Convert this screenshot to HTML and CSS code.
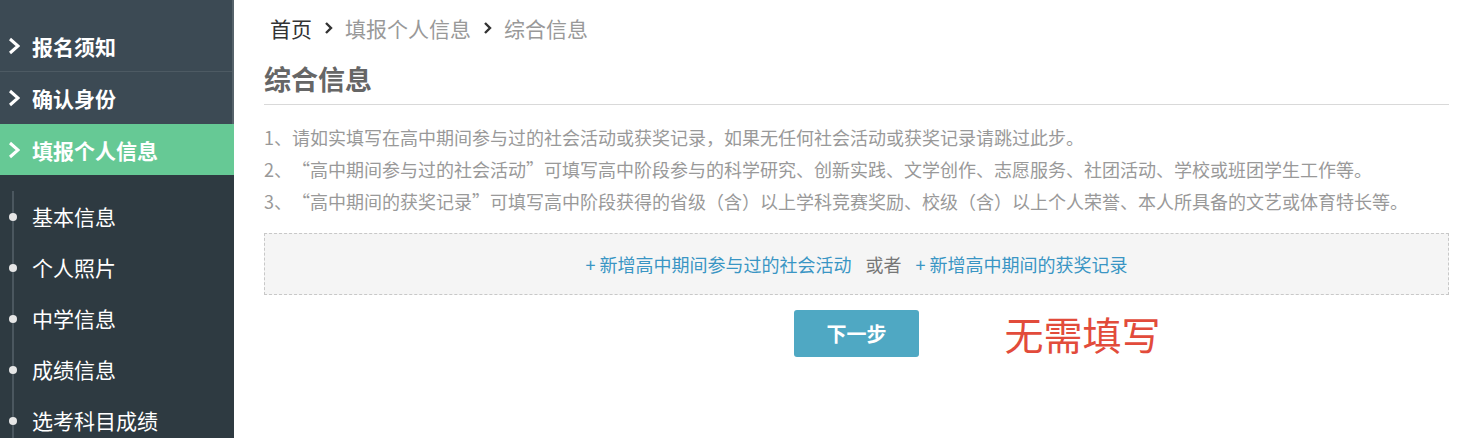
FILE: index.html
```html
<!DOCTYPE html>
<html lang="zh-CN">
<head>
  <meta charset="UTF-8">
  <title>综合信息</title>
  <link rel="stylesheet" href="styles.css">
</head>
<body>
  <div id="layout">
    <div id="sidebar">
      <div class="nav-top">
        <div class="nav-item sep">
          <svg class="arrow" width="12" height="18" viewBox="0 0 12 18"><polyline points="2,2 10,9 2,16" fill="none" stroke="#fff" stroke-width="3"/></svg>
          报名须知
        </div>
        <div class="nav-item">
          <svg class="arrow" width="12" height="18" viewBox="0 0 12 18"><polyline points="2,2 10,9 2,16" fill="none" stroke="#fff" stroke-width="3"/></svg>
          确认身份
        </div>
      </div>
      <div class="nav-item active">
        <svg class="arrow" width="12" height="18" viewBox="0 0 12 18"><polyline points="2,2 10,9 2,16" fill="none" stroke="#fff" stroke-width="3"/></svg>
        填报个人信息
      </div>
      <div class="sub-wrap">
        <ul class="sub-list">
          <li>基本信息</li>
          <li>个人照片</li>
          <li>中学信息</li>
          <li>成绩信息</li>
          <li>选考科目成绩</li>
        </ul>
      </div>
    </div>

    <div id="main">
      <div class="crumbs">
        <span class="home">首页</span>
        <svg class="crumb-sep" width="10" height="14" viewBox="0 0 10 14"><polyline points="2,2 7,7 2,12" fill="none" stroke="#333" stroke-width="2.4"/></svg>
        <span>填报个人信息</span>
        <svg class="crumb-sep" width="10" height="14" viewBox="0 0 10 14"><polyline points="2,2 7,7 2,12" fill="none" stroke="#333" stroke-width="2.4"/></svg>
        <span>综合信息</span>
      </div>

      <h2 class="title">综合信息</h2>

      <div class="notes">
        <p>1、请如实填写在高中期间参与过的社会活动或获奖记录，如果无任何社会活动或获奖记录请跳过此步。</p>
        <p>2、“高中期间参与过的社会活动”可填写高中阶段参与的科学研究、创新实践、文学创作、志愿服务、社团活动、学校或班团学生工作等。</p>
        <p>3、“高中期间的获奖记录”可填写高中阶段获得的省级（含）以上学科竞赛奖励、校级（含）以上个人荣誉、本人所具备的文艺或体育特长等。</p>
      </div>

      <div class="add-box">
        <a href="#">+ 新增高中期间参与过的社会活动</a>
        <span class="or">或者</span>
        <a href="#">+ 新增高中期间的获奖记录</a>
      </div>

      <div class="actions">
        <button class="next">下一步</button>
        <span class="hint">无需填写</span>
      </div>
    </div>
  </div>
</body>
</html>
```

FILE: styles.css
```css
    html, body {
      margin: 0;
      height: 100%;
    }

    body {
      font-family: "Microsoft YaHei", "Noto Sans CJK SC", sans-serif;
      background-color: #fff;
      overflow: hidden;
    }

    #layout {
      display: flex;
      height: 100%;
    }

    #sidebar {
      width: 234px;
      flex-shrink: 0;
      background-color: #2e3a41;
    }

    .nav-top {
      background-color: #3c4a54;
      padding-top: 20px;
      border-right: 2px solid #56636b;
    }

    .nav-item {
      height: 52px;
      display: flex;
      align-items: center;
      padding-left: 8px;
      color: #fff;
      font-size: 21px;
      font-weight: bold;
      box-sizing: border-box;
    }

    .nav-item .arrow {
      margin-right: 12px;
    }

    .nav-item.sep {
      border-bottom: 1px solid #4d5a63;
    }

    .nav-item.active {
      background-color: #66c995;
      height: 51px;
    }

    .sub-wrap {
      padding-top: 16px;
    }

    .sub-list {
      list-style: none;
      margin: 0 0 0 12px;
      padding: 0;
      border-left: 2px solid #4b575f;
    }

    .sub-list li {
      position: relative;
      height: 51px;
      line-height: 51px;
      padding-left: 18px;
      color: #fff;
      font-size: 21px;
    }

    /* little dot on the line */
    .sub-list li::before {
      content: "";
      position: absolute;
      left: -5px;
      top: 22px;
      width: 8px;
      height: 8px;
      border-radius: 50%;
      background-color: #e6e6e6;
    }

    #main {
      flex: 1;
      padding: 0 25px 0 30px;
    }

    .crumbs {
      padding-top: 14px;
      line-height: 28px;
      font-size: 21px;
      color: #999;
      display: flex;
      align-items: center;
      padding-left: 6px;
    }

    .crumbs .home {
      color: #333;
    }

    .crumb-sep {
      margin: 0 11px 0 12px;
    }

    .title {
      margin: 19px 0 0 0;
      padding-bottom: 7px;
      font-size: 27px;
      line-height: 36px;
      color: #666;
      border-bottom: 1px solid #d9d9d9;
    }

    .notes {
      margin-top: 16px;
    }

    .notes p {
      margin: 0;
      font-size: 18px;
      line-height: 32px;
      color: #999;
      white-space: nowrap;
      text-spacing-trim: space-all;
    }

    .add-box {
      margin-top: 16px;
      height: 60px;
      line-height: 60px;
      border: 1px dashed #c8c8c8;
      background-color: #f5f5f5;
      text-align: center;
      font-size: 18px;
    }

    .add-box a {
      color: #3a95c4;
      text-decoration: none;
    }

    .add-box .or {
      color: #777;
      margin: 0 10px;
    }

    .actions {
      position: relative;
      margin-top: 15px;
      display: flex;
      justify-content: center;
    }

    .next {
      width: 125px;
      height: 47px;
      background-color: #4fa8c3;
      color: #fff;
      border: none;
      border-radius: 3px;
      font-family: inherit;
      font-size: 20px;
      font-weight: bold;
      cursor: pointer;
    }

    .hint {
      position: absolute;
      left: calc(50% + 148px);
      top: 0;
      line-height: 47px;
      color: #e24b3b;
      font-size: 39px;
    }
```
